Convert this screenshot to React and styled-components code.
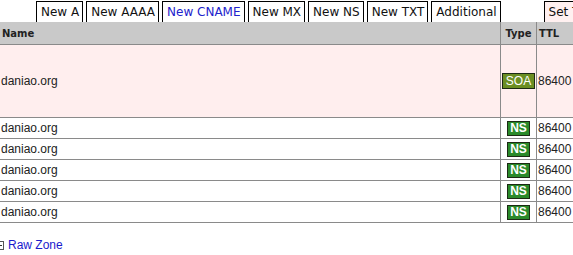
import React from "react";
import styled, { createGlobalStyle } from "styled-components";

const GlobalStyle = createGlobalStyle`
  html, body {
    margin: 0;
    padding: 0;
    background: #fff;
    overflow: hidden;
  }
  body {
    font-family: "Liberation Sans", Arial, sans-serif;
    font-size: 12px;
    color: #222;
  }
`;

const Page = styled.div`
  width: 573px;
  height: 255px;
  overflow: hidden;
`;

const TabBar = styled.div`
  display: flex;
  align-items: flex-end;
  gap: 3px;
  height: 22px;
  padding-left: 36px;
  white-space: nowrap;
`;

const Tab = styled.div`
  box-sizing: border-box;
  height: 21px;
  display: flex;
  align-items: center;
  padding: 0 3px 0 4px;
  border: 1px solid #000;
  border-bottom: none;
  background: ${(p) => (p.$pink ? "#fff0f0" : "#fff")};
  color: ${(p) => (p.$active ? "#2222cc" : "#111")};
  font-family: "DejaVu Sans", Verdana, sans-serif;
  font-size: 12px;
  margin-left: ${(p) => (p.$push ? "40px" : "0")};
  flex-shrink: 0;
`;

const Grid = styled.div`
  width: 700px;
`;

const Row = styled.div`
  box-sizing: border-box;
  display: grid;
  grid-template-columns: 501px 36px 1fr;
  height: ${(p) => p.$h}px;
  border-bottom: 1px solid #8a8a8a;
  background: ${(p) => p.$bg || "#fff"};
`;

const Cell = styled.div`
  box-sizing: border-box;
  display: flex;
  align-items: center;
  justify-content: ${(p) => (p.$center ? "center" : "flex-start")};
  padding-left: ${(p) => (p.$center ? 0 : 1)}px;
  border-right: 1px solid #8a8a8a;
  white-space: nowrap;
  overflow: hidden;
`;

const HeadCell = styled(Cell)`
  font-family: "DejaVu Sans", Verdana, sans-serif;
  font-weight: bold;
  font-size: 10px;
  color: #222;
  padding-left: ${(p) => (p.$center ? 0 : 2)}px;
`;

const Badge = styled.span`
  box-sizing: border-box;
  display: inline-flex;
  align-items: center;
  height: ${(p) => (p.$type === "SOA" ? 16 : 15)}px;
  padding: 0 ${(p) => (p.$type === "SOA" ? 3 : 2)}px;
  border: 1px solid #1c2a14;
  background: ${(p) => (p.$type === "SOA" ? "#6b8e23" : "#2a8a2a")};
  color: #fff;
  font-size: 12px;
  font-weight: ${(p) => (p.$type === "SOA" ? "normal" : "bold")};
`;

const Footer = styled.div`
  display: flex;
  align-items: center;
  gap: 4px;
  margin-top: 14px;
  line-height: 16px;
`;

const ToggleIcon = styled.svg`
  margin-left: -5px;
  flex-shrink: 0;
`;

const Link = styled.a`
  color: #1a1acc;
  text-decoration: none;
  font-size: 12px;
`;

const tabs = ["New A", "New AAAA", "New CNAME", "New MX", "New NS", "New TXT", "Additional"];

const records = [
  { name: "daniao.org", type: "SOA", ttl: "86400", h: 73, bg: "#ffeeee" },
  { name: "daniao.org", type: "NS", ttl: "86400", h: 21 },
  { name: "daniao.org", type: "NS", ttl: "86400", h: 21 },
  { name: "daniao.org", type: "NS", ttl: "86400", h: 21 },
  { name: "daniao.org", type: "NS", ttl: "86400", h: 21 },
  { name: "daniao.org", type: "NS", ttl: "86400", h: 21 },
];

export default function App() {
  return (
    <Page>
      <GlobalStyle />
      <TabBar>
        {tabs.map((t) => (
          <Tab key={t} $active={t === "New CNAME"}>
            {t}
          </Tab>
        ))}
        <Tab $pink $push>
          Set TTL
        </Tab>
      </TabBar>
      <Grid>
        <Row $h={23} $bg="#c9c9c9">
          <HeadCell>Name</HeadCell>
          <HeadCell $center>Type</HeadCell>
          <HeadCell>TTL</HeadCell>
        </Row>
        {records.map((r, i) => (
          <Row key={i} $h={r.h} $bg={r.bg}>
            <Cell>{r.name}</Cell>
            <Cell $center>
              <Badge $type={r.type}>{r.type}</Badge>
            </Cell>
            <Cell>{r.ttl}</Cell>
          </Row>
        ))}
      </Grid>
      <Footer>
        <ToggleIcon width="9" height="9" viewBox="0 0 9 9">
          <rect x="0.5" y="0.5" width="8" height="8" fill="#fff" stroke="#555" />
          <line x1="2" y1="4.5" x2="7" y2="4.5" stroke="#333" />
        </ToggleIcon>
        <Link href="#">Raw Zone</Link>
      </Footer>
    </Page>
  );
}
